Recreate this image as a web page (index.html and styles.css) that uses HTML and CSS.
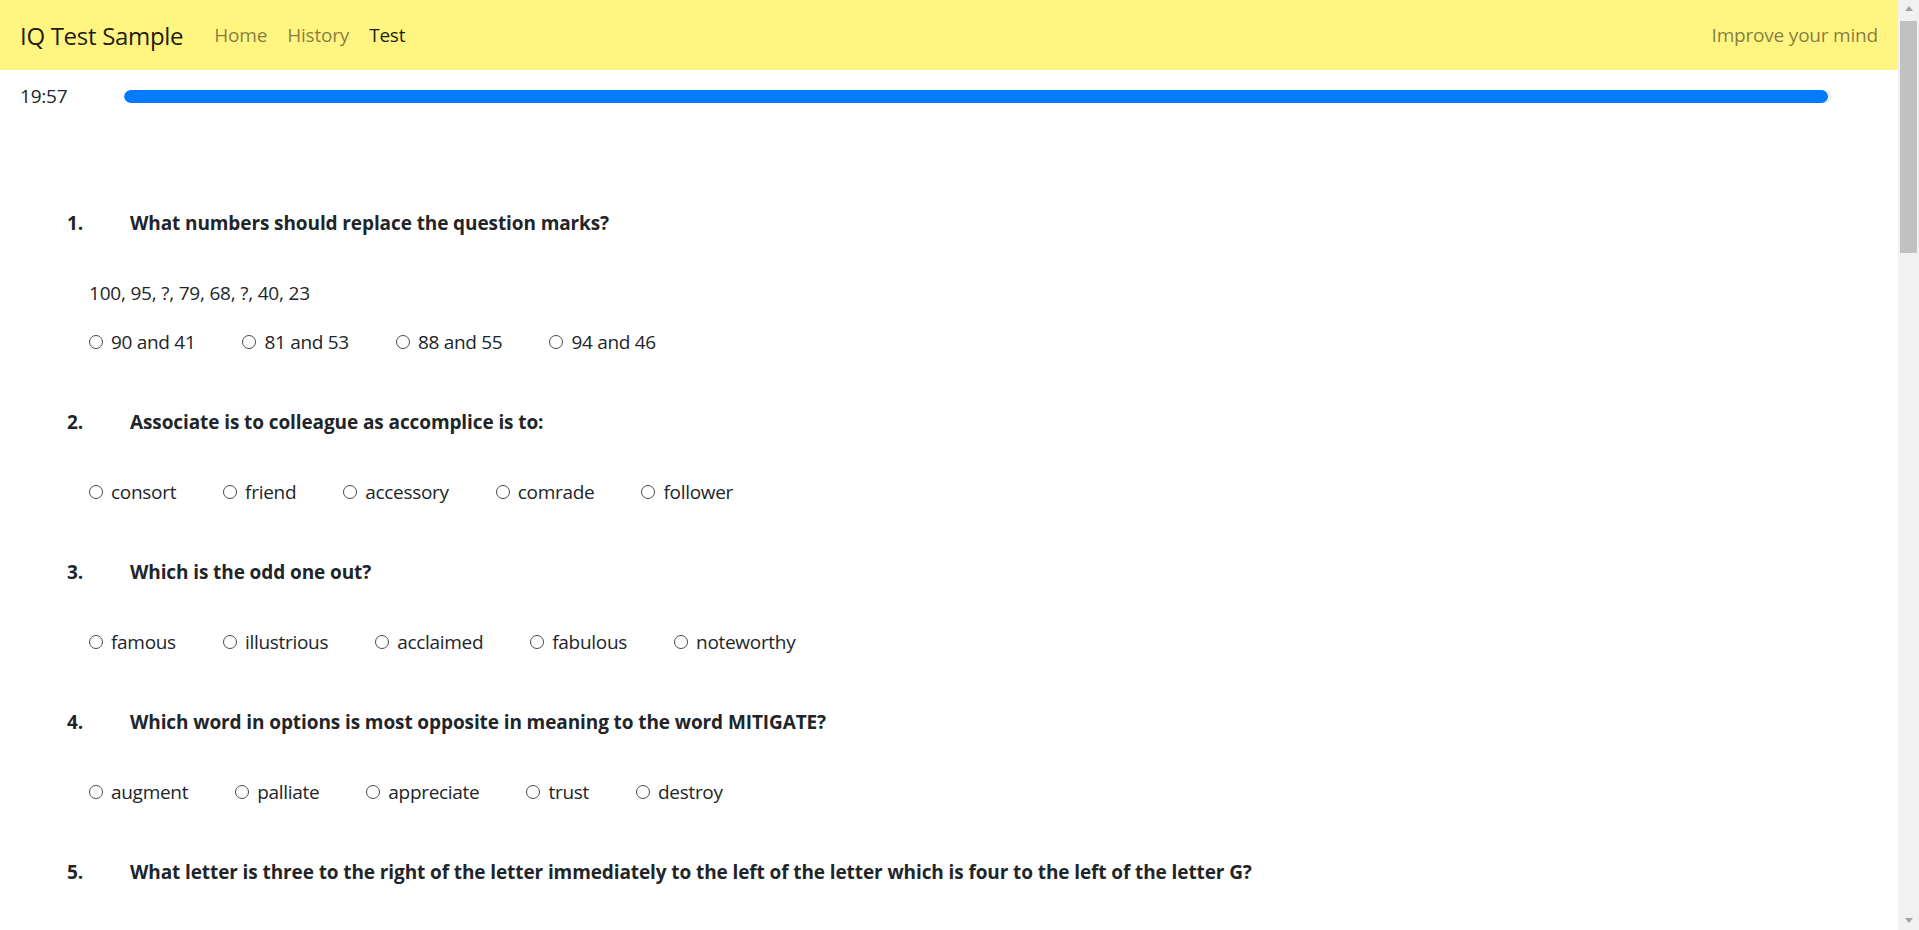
FILE: index.html
```html
<!DOCTYPE html>
<html lang="en">
<head>
<meta charset="utf-8">
<title>IQ Test Sample</title>
<link rel="stylesheet" href="styles.css">
</head>
<body>
<nav class="navbar">
  <a class="brand" href="#">IQ Test Sample</a>
  <ul class="nav">
    <li><a class="nav-link" href="#">Home</a></li>
    <li><a class="nav-link" href="#">History</a></li>
    <li><a class="nav-link active" href="#">Test</a></li>
  </ul>
  <span class="navbar-text">Improve your mind</span>
</nav>

<div class="timer-row">
  <span class="timer">19:57</span>
  <div class="progress"><div class="progress-bar" style="width:99.75%"></div></div>
</div>

<form class="questions">
  <section class="question">
    <div class="q-head"><span class="q-num">1.</span><span class="q-text">What numbers should replace the question marks?</span></div>
    <div class="q-body">
      <p class="q-seq">100, 95, ?, 79, 68, ?, 40, 23</p>
      <div class="options">
        <label class="option"><input type="radio" name="q1">90 and 41</label>
        <label class="option"><input type="radio" name="q1">81 and 53</label>
        <label class="option"><input type="radio" name="q1">88 and 55</label>
        <label class="option"><input type="radio" name="q1">94 and 46</label>
      </div>
    </div>
  </section>

  <section class="question">
    <div class="q-head"><span class="q-num">2.</span><span class="q-text">Associate is to colleague as accomplice is to:</span></div>
    <div class="q-body">
      <div class="options">
        <label class="option"><input type="radio" name="q2">consort</label>
        <label class="option"><input type="radio" name="q2">friend</label>
        <label class="option"><input type="radio" name="q2">accessory</label>
        <label class="option"><input type="radio" name="q2">comrade</label>
        <label class="option"><input type="radio" name="q2">follower</label>
      </div>
    </div>
  </section>

  <section class="question">
    <div class="q-head"><span class="q-num">3.</span><span class="q-text">Which is the odd one out?</span></div>
    <div class="q-body">
      <div class="options">
        <label class="option"><input type="radio" name="q3">famous</label>
        <label class="option"><input type="radio" name="q3">illustrious</label>
        <label class="option"><input type="radio" name="q3">acclaimed</label>
        <label class="option"><input type="radio" name="q3">fabulous</label>
        <label class="option"><input type="radio" name="q3">noteworthy</label>
      </div>
    </div>
  </section>

  <section class="question">
    <div class="q-head"><span class="q-num">4.</span><span class="q-text">Which word in options is most opposite in meaning to the word MITIGATE?</span></div>
    <div class="q-body">
      <div class="options">
        <label class="option"><input type="radio" name="q4">augment</label>
        <label class="option"><input type="radio" name="q4">palliate</label>
        <label class="option"><input type="radio" name="q4">appreciate</label>
        <label class="option"><input type="radio" name="q4">trust</label>
        <label class="option"><input type="radio" name="q4">destroy</label>
      </div>
    </div>
  </section>

  <section class="question">
    <div class="q-head"><span class="q-num">5.</span><span class="q-text">What letter is three to the right of the letter immediately to the left of the letter which is four to the left of the letter G?</span></div>
    <div class="q-body">
      <div class="options">
        <label class="option"><input type="radio" name="q5">B</label>
        <label class="option"><input type="radio" name="q5">C</label>
        <label class="option"><input type="radio" name="q5">D</label>
        <label class="option"><input type="radio" name="q5">E</label>
        <label class="option"><input type="radio" name="q5">F</label>
      </div>
    </div>
  </section>

  <section class="question">
    <div class="q-head"><span class="q-num">6.</span><span class="q-text">Which number is the odd one out?</span></div>
    <div class="q-body">
      <div class="options">
        <label class="option"><input type="radio" name="q6">121</label>
        <label class="option"><input type="radio" name="q6">144</label>
        <label class="option"><input type="radio" name="q6">169</label>
        <label class="option"><input type="radio" name="q6">194</label>
        <label class="option"><input type="radio" name="q6">225</label>
      </div>
    </div>
  </section>

  <section class="question">
    <div class="q-head"><span class="q-num">7.</span><span class="q-text">What number should come next in the series?</span></div>
    <div class="q-body">
      <p class="q-seq">3, 6, 11, 18, 27, ?</p>
      <div class="options">
        <label class="option"><input type="radio" name="q7">36</label>
        <label class="option"><input type="radio" name="q7">38</label>
        <label class="option"><input type="radio" name="q7">40</label>
        <label class="option"><input type="radio" name="q7">42</label>
      </div>
    </div>
  </section>

  <section class="question">
    <div class="q-head"><span class="q-num">8.</span><span class="q-text">Cup is to coffee as bowl is to:</span></div>
    <div class="q-body">
      <div class="options">
        <label class="option"><input type="radio" name="q8">dish</label>
        <label class="option"><input type="radio" name="q8">soup</label>
        <label class="option"><input type="radio" name="q8">spoon</label>
        <label class="option"><input type="radio" name="q8">food</label>
        <label class="option"><input type="radio" name="q8">plate</label>
      </div>
    </div>
  </section>

  <section class="question">
    <div class="q-head"><span class="q-num">9.</span><span class="q-text">Which word is the odd one out?</span></div>
    <div class="q-body">
      <div class="options">
        <label class="option"><input type="radio" name="q9">apple</label>
        <label class="option"><input type="radio" name="q9">banana</label>
        <label class="option"><input type="radio" name="q9">carrot</label>
        <label class="option"><input type="radio" name="q9">mango</label>
        <label class="option"><input type="radio" name="q9">grape</label>
      </div>
    </div>
  </section>

  <section class="question">
    <div class="q-head"><span class="q-num">10.</span><span class="q-text">If all Bloops are Razzies and all Razzies are Lazzies, then all Bloops are definitely Lazzies.</span></div>
    <div class="q-body">
      <div class="options">
        <label class="option"><input type="radio" name="q10">true</label>
        <label class="option"><input type="radio" name="q10">false</label>
        <label class="option"><input type="radio" name="q10">cannot tell</label>
      </div>
    </div>
  </section>
</form>

<div class="scrollbar" aria-hidden="true">
  <span class="sb-btn"><span class="sb-arrow up"></span></span>
  <span class="sb-thumb"></span>
  <span class="sb-rest"></span>
  <span class="sb-btn"><span class="sb-arrow down"></span></span>
</div>
</body>
</html>
```
FILE: styles.css
```css
html {
  background: #fff;
}
body {
  margin: 0;
  padding-right: 21px;
  font-family: "Open Sans", "Noto Sans", sans-serif;
  font-size: 19px;
  letter-spacing: -0.2px;
  line-height: 30px;
  color: #212529;
  background: #fff;
  height: 930px;
  overflow: hidden;
}

/* Navbar */
.navbar {
  display: flex;
  align-items: center;
  height: 70px;
  padding: 0 20px;
  background: #fff580;
}
.brand {
  font-size: 24px;
  line-height: 37px;
  color: rgba(0, 0, 0, 0.9);
  text-decoration: none;
  margin-right: 21px;
  letter-spacing: -0.3px;
}
.nav {
  display: flex;
  list-style: none;
  margin: 0;
  padding: 0;
}
.nav-link {
  display: block;
  padding: 0 10px;
  color: rgba(0, 0, 0, 0.5);
  text-decoration: none;
}
.nav-link.active {
  color: rgba(0, 0, 0, 0.9);
}
.navbar-text {
  margin-left: auto;
  color: rgba(0, 0, 0, 0.5);
}

/* Timer */
.timer-row {
  display: flex;
  align-items: center;
  padding: 11px 66px 0 20px;
}
.timer {
  width: 104px;
  flex: none;
}
.progress {
  flex: 1;
  height: 13px;
  border-radius: 7px;
  background: #eef2f6;
  overflow: hidden;
  display: flex;
}
.progress-bar {
  height: 100%;
  background: #007bff;
  border-radius: 7px;
}

/* Questions */
.questions {
  margin: 0;
  padding: 97px 0 100px;
}
.question {
  margin-bottom: 50px;
}
.q-head {
  display: flex;
  padding-left: 67px;
  font-weight: 700;
}
.q-num {
  width: 63px;
  flex: none;
}
.q-text {
  letter-spacing: -0.1px;
}
.q-body {
  padding: 40px 0 0 89px;
}
.q-seq {
  margin: 0 0 19px;
}
.options {
  display: flex;
  flex-wrap: wrap;
}
.option {
  margin-right: 47px;
  white-space: nowrap;
  letter-spacing: -0.3px;
}
.option input {
  appearance: none;
  -webkit-appearance: none;
  width: 14px;
  height: 14px;
  margin: 0 8px 0 0;
  border: 1px solid #4a4a4a;
  border-radius: 50%;
  background: #fff;
  vertical-align: baseline;
}

/* Browser scrollbar as shown in the screenshot */
.scrollbar {
  position: fixed;
  top: 0;
  right: 0;
  width: 21px;
  height: 100vh;
  background: #f1f1f1;
  display: flex;
  flex-direction: column;
}
.sb-btn {
  height: 21px;
  flex: none;
  display: flex;
  align-items: center;
  justify-content: center;
}
.sb-arrow {
  width: 0;
  height: 0;
  border-left: 4.5px solid transparent;
  border-right: 4.5px solid transparent;
}
.sb-arrow.up {
  border-bottom: 5px solid #a3a3a3;
  margin-top: -4px;
}
.sb-arrow.down {
  border-top: 5px solid #a3a3a3;
  margin-top: 2px;
}
.sb-thumb {
  height: 232px;
  margin: 0 2px;
  background: #c1c1c1;
  flex: none;
}
.sb-rest {
  flex: 1;
}
```
